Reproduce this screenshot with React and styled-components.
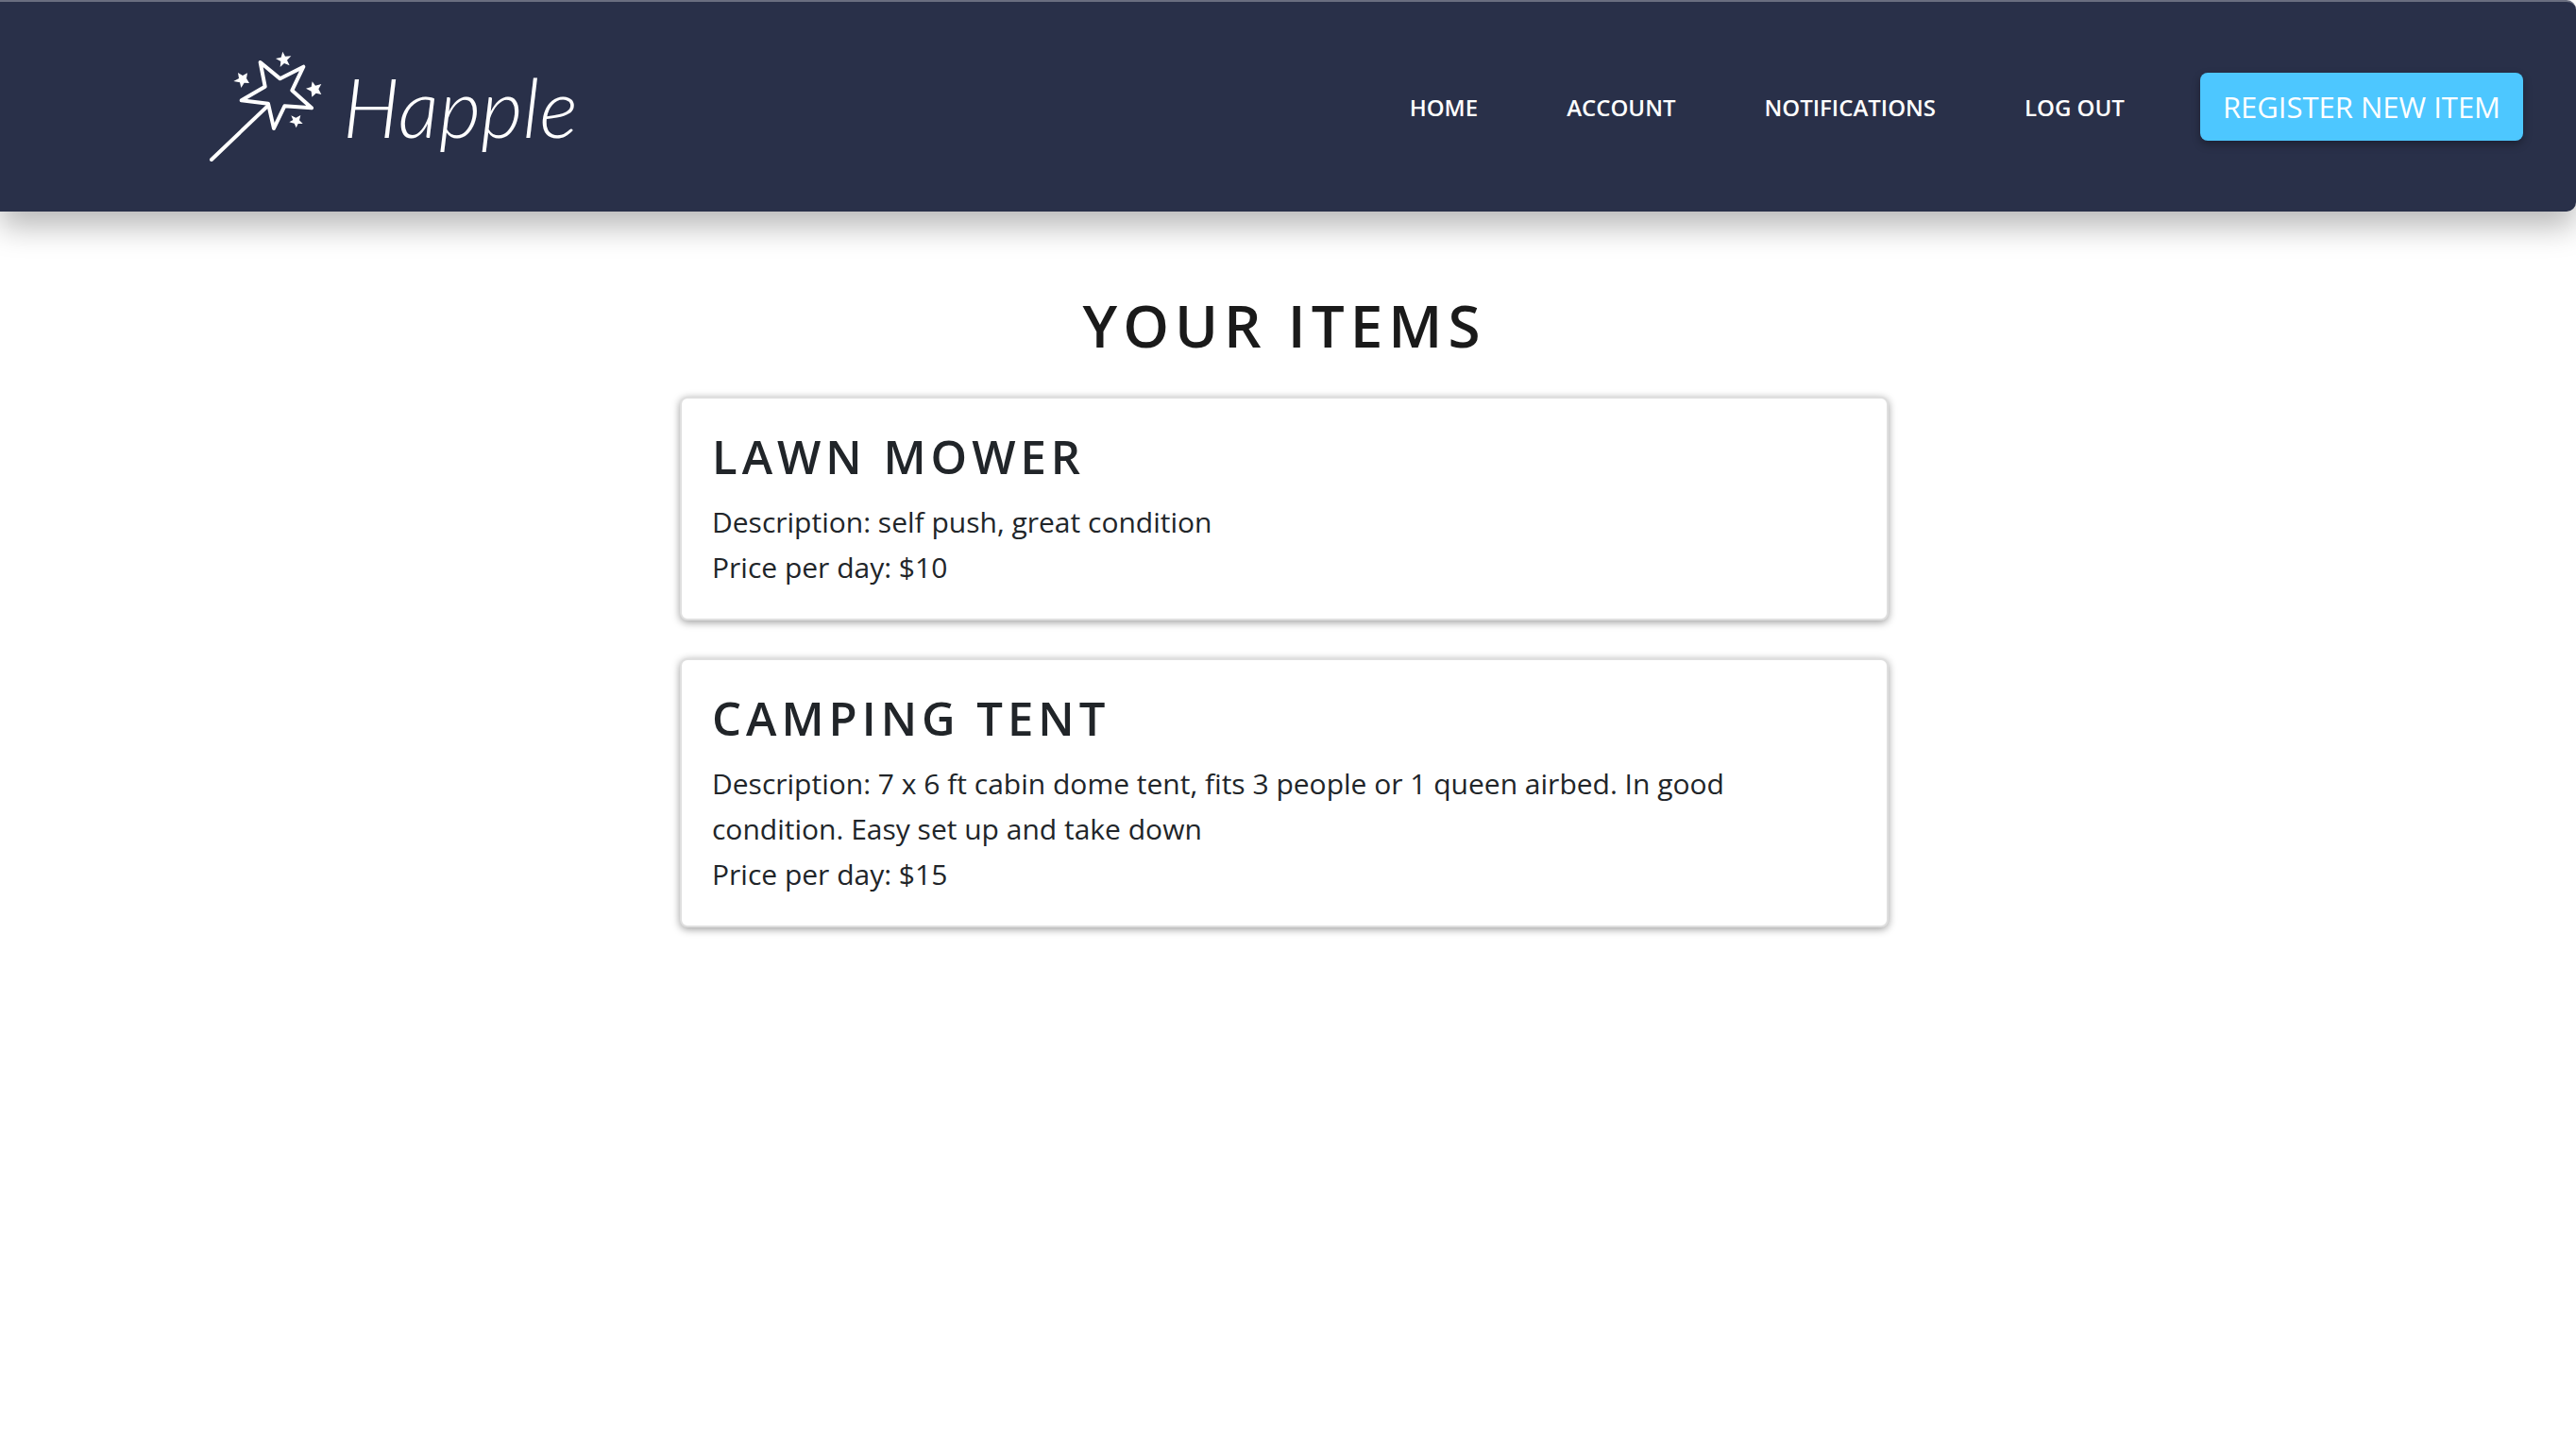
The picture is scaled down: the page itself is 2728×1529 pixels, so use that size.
import React from "react";
import styled, { createGlobalStyle } from "styled-components";

const GlobalStyle = createGlobalStyle`
  *, *::before, *::after { box-sizing: border-box; }
  body {
    margin: 0;
    background: #fff;
    color: #212529;
    font-family: "Open Sans", "Noto Sans", sans-serif;
    font-size: 30px;
    line-height: 48px;
  }
`;

const Header = styled.header`
  display: flex;
  align-items: center;
  justify-content: space-between;
  min-height: 224px;
  padding: 0 56px 0 220px;
  background: #293049;
  border-top: 2px solid #696e80;
  border-radius: 0 10px 10px 0;
  box-shadow: 0 16px 32px rgba(0, 0, 0, 0.28);
`;

const Brand = styled.a`
  display: flex;
  align-items: center;
  gap: 18px;
  color: #fff;
  text-decoration: none;
`;

const Wand = styled.svg`
  width: 125px;
  height: 122px;
`;

const Wordmark = styled.span`
  font-family: Lato, sans-serif;
  font-size: 86px;
  font-style: italic;
  font-weight: 300;
  line-height: 120px;
`;

const Nav = styled.nav`
  display: flex;
  align-items: center;
  gap: 80px;
`;

const NavLinks = styled.ul`
  display: flex;
  gap: 94px;
  margin: 0;
  padding: 0;
  list-style: none;
`;

const NavLink = styled.a`
  color: #fff;
  font-size: 24px;
  font-weight: 600;
  text-decoration: none;
  text-transform: uppercase;
`;

const RegisterButton = styled.button`
  padding: 12px 24px;
  border: 0;
  border-radius: 8px;
  background: #4dc7ff;
  box-shadow: 0 4px 10px rgba(0, 0, 0, 0.3);
  color: #fff;
  font: inherit;
  font-size: 31px;
  text-transform: uppercase;
  cursor: pointer;
`;

const Main = styled.main`
  display: flex;
  flex-direction: column;
  align-items: center;
  padding: 80px 8px 80px 0;
`;

const PageTitle = styled.h1`
  margin: 0 0 36px;
  color: #1a1a1a;
  font-size: 62px;
  font-weight: 600;
  letter-spacing: 6px;
  line-height: 80px;
  text-transform: uppercase;
`;

const ItemList = styled.div`
  display: flex;
  flex-direction: column;
  gap: 40px;
  width: 100%;
  max-width: 1280px;
`;

const Card = styled.article`
  padding: 32px 32px 30px;
  border: 2px solid #dfdfdf;
  border-radius: 8px;
  background: #fff;
  box-shadow: 0 2px 8px rgba(0, 0, 0, 0.4);
`;

const CardTitle = styled.h2`
  margin: 0 0 16px;
  font-size: 49px;
  font-weight: 600;
  letter-spacing: 5px;
  line-height: 59px;
  text-transform: uppercase;
`;

const CardText = styled.p`
  margin: 0;
`;

const links = ["Home", "Account", "Notifications", "Log out"];

const items = [
  { name: "Lawn Mower", description: "self push, great condition", price: 10 },
  {
    name: "Camping Tent",
    description:
      "7 x 6 ft cabin dome tent, fits 3 people or 1 queen airbed. In good condition. Easy set up and take down",
    price: 15,
  },
];

function WandIcon() {
  return (
    <Wand viewBox="60 100 375 366" aria-hidden="true">
      <g fill="none" stroke="#fff" strokeWidth="12">
        <path d="M227 142 L290 194 L364 156 L328 231 L390 287 L304 281 L270 352 L252 273 L167 263 L242 219 Z" strokeLinejoin="round" />
        <path d="M72 451 L250 281" strokeLinecap="round" />
      </g>
      <g fill="#fff">
        <path d="M298 108 L306 123 L325 122 L312 135 L320 152 L303 145 L290 157 L292 139 L276 130 L293 126 Z" />
        <path d="M186 176 L183 193 L192 208 L176 207 L166 223 L162 206 L142 202 L159 193 L156 175 L171 184 Z" />
        <path d="M392 203 L402 216 L421 211 L412 227 L421 244 L404 240 L391 252 L389 234 L372 225 L389 220 Z" />
        <path d="M325 311 L340 318 L355 310 L351 326 L362 337 L347 337 L341 350 L335 336 L319 332 L331 325 Z" />
      </g>
    </Wand>
  );
}

export default function App() {
  return (
    <>
      <GlobalStyle />
      <Header>
        <Brand href="#home">
          <WandIcon />
          <Wordmark>Happle</Wordmark>
        </Brand>
        <Nav>
          <NavLinks>
            {links.map((label) => (
              <li key={label}>
                <NavLink href="#">{label}</NavLink>
              </li>
            ))}
          </NavLinks>
          <RegisterButton type="button">Register new item</RegisterButton>
        </Nav>
      </Header>
      <Main>
        <PageTitle>Your items</PageTitle>
        <ItemList>
          {items.map((item) => (
            <Card key={item.name}>
              <CardTitle>{item.name}</CardTitle>
              <CardText>{`Description: ${item.description}`}</CardText>
              <CardText>{`Price per day: $${item.price}`}</CardText>
            </Card>
          ))}
        </ItemList>
      </Main>
    </>
  );
}
